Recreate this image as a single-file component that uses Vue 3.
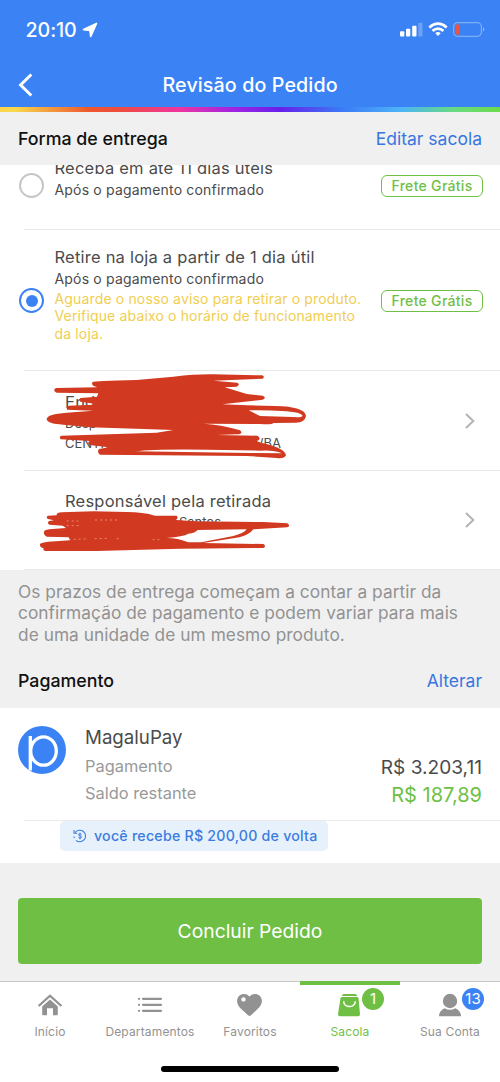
<script setup>
const tabs = [
  { id: 'home', label: 'Início' },
  { id: 'list', label: 'Departamentos' },
  { id: 'heart', label: 'Favoritos' },
  { id: 'bag', label: 'Sacola', badge: '1', active: true },
  { id: 'user', label: 'Sua Conta', badge: '13' },
]
</script>

<template>
  <div class="screen">
    <header class="header">
      <div class="status">
        <span class="time">20:10</span>
        <svg class="arrow" width="16" height="16" viewBox="0 0 16 16"><path d="M14.500 1.500 8.700 14.300 8 8.300 1.600 7.600z" fill="#fff" stroke="#fff" stroke-width="1.700" stroke-linejoin="round"/></svg>
        <svg class="signals" width="88" height="18" viewBox="0 0 88 18">
          <g fill="#fff">
            <rect x="1" y="10.200" width="4.300" height="5.200" rx="1"/>
            <rect x="7" y="7.800" width="4.300" height="7.600" rx="1"/>
            <rect x="13.200" y="4.700" width="4.300" height="10.700" rx="1"/>
            <rect x="19.300" y="1.700" width="4.200" height="13.700" rx="1" opacity=".25"/>
            <path d="M36.300 12.200q2.700-2.300 5.400 0L39 15z"/>
          </g>
          <g fill="none" stroke="#fff" stroke-width="2.700">
            <path d="M30.300 6.400q8.700-7.600 17.400 0"/>
            <path d="M33.500 9.900q5.500-4.500 11 0"/>
          </g>
          <rect x="54.600" y="1.700" width="27.800" height="13.600" rx="4" fill="none" stroke="#fff" stroke-opacity=".35" stroke-width="1.200"/>
          <rect x="56.400" y="3.400" width="4" height="10.200" rx="1.300" fill="#ec5545"/>
          <path d="M84 6.300q2.500 2.200 0 4.400z" fill="#fff" opacity=".45"/>
        </svg>
      </div>
      <div class="titlebar">
        <svg class="back" width="16" height="26" viewBox="0 0 16 26"><path d="M13.300 2.500 2.600 13l10.700 10.500" fill="none" stroke="#fff" stroke-width="3"/></svg>
        <h1>Revisão do Pedido</h1>
      </div>
    </header>
    <div class="stripe"></div>

    <div class="section-head">
      <h2>Forma de entrega</h2>
      <a>Editar sacola</a>
    </div>

    <main class="card">
      <section class="option option-first">
        <span class="radio"></span>
        <div class="copy">
          <p class="title">Receba em até 11 dias úteis</p>
          <p class="sub">Após o pagamento confirmado</p>
        </div>
        <span class="free">Frete Grátis</span>
      </section>
      <section class="option option-second">
        <span class="radio checked"></span>
        <div class="copy">
          <p class="title">Retire na loja a partir de 1 dia útil</p>
          <p class="sub">Após o pagamento confirmado</p>
          <p class="warn">Aguarde o nosso aviso para retirar o produto.<br>Verifique abaixo o horário de funcionamento<br>da loja.</p>
        </div>
        <span class="free">Frete Grátis</span>
      </section>
      <section class="detail address">
        <div class="copy">
          <p class="title">Endereço</p>
          <p class="line">Desp</p>
          <p class="line city"><span>CENTRO</span><span>/BA</span></p>
        </div>
        <svg class="chev" width="12" height="18" viewBox="0 0 12 18"><path d="m2 2 7.300 7L2 16" fill="none" stroke="#b4b4b4" stroke-width="2"/></svg>
        <svg class="scribble" width="290" height="105" viewBox="0 0 870 315">
          <path fill="#d13a20" d="M188 51Q192 48 320 45L430 35Q500 27 550 28L697 31Q706 36 698 41L550 47L622 53Q632 59 620 65L584 67L650 87L698 92Q711 98 698 104L577 118L650 121L735 123Q825 125 828 153Q824 174 795 173L731 174Q725 180 690 177L521 176Q570 178 630 196Q642 207 620 208L560 210L682 212Q693 218 686 226Q673 229 700 235Q765 250 768 271Q762 283 740 279L650 273L210 269Q200 261 207 252L235 247L178 240Q170 232 180 228L92 223Q86 216 94 212L380 203L430 195L180 187L100 179Q50 176 50 162Q52 147 110 143L190 137L111 134Q108 123 117 122L190 119L192 116L151 110Q144 102 152 99L201 95L205 85L80 83Q66 76 78 69L202 67L189 62Q184 56 188 51Z"/>
          <path fill="#fff" d="M656 136Q710 135 770 139Q810 142 818 152Q814 158 790 156L690 153ZM318 259Q370 252 530 254L690 257Q730 254 756 265L660 264Z"/>
        </svg>
      </section>
      <section class="detail pickup">
        <div class="copy">
          <p class="title">Responsável pela retirada</p>
          <p class="line person"><span>M</span><span>Santos</span></p>
        </div>
        <svg class="chev" width="12" height="18" viewBox="0 0 12 18"><path d="m2 2 7.300 7L2 16" fill="none" stroke="#b4b4b4" stroke-width="2"/></svg>
        <svg class="scribble" width="290" height="100" viewBox="0 0 870 300">
          <path fill="#d13a20" d="M54 107L80 106Q78 98 96 97L190 94L290 96Q340 96 375 107L440 107Q446 114 438 120L500 124L700 126L772 130Q783 137 772 142L670 148Q659 164 628 172L520 189L700 192Q710 199 700 204L450 206L200 213L45 213Q38 210 41 205Q28 202 30 192Q35 187 55 185L120 181L116 172L50 170Q38 164 43 153Q46 148 67 147L108 144L98 137L58 134Q50 129 57 123L72 121L54 117Q46 111 54 107Z"/>
          <path fill="#fff" d="M410 174Q460 170 475 161Q496 159 503 150L650 148Q641 160 610 168L514 187L475 187Q444 174 410 174Z"/>
          <path d="M110 123h35M195 120h72M110 137h38M116 179l60-3m18 0 44-1m22 1h8m100 3h20" fill="none" stroke="#e9b5aa" stroke-width="2" stroke-dasharray="6 9"/>
        </svg>
      </section>
    </main>

    <p class="note">Os prazos de entrega começam a contar a partir da<br>confirmação de pagamento e podem variar para mais<br>de uma unidade de um mesmo produto.</p>

    <div class="section-head pay-head">
      <h2>Pagamento</h2>
      <a>Alterar</a>
    </div>

    <section class="pay">
      <div class="pay-main">
        <svg class="logo" width="48" height="48" viewBox="0 0 48 48"><circle cx="24" cy="24" r="24" fill="#3b83f5"/><g fill="none" stroke="#fff" stroke-width="3.300"><path d="M12.300 10V44.500"/><ellipse cx="25.500" cy="25" rx="12.800" ry="14.200"/></g></svg>
        <div class="labels">
          <p class="brand">MagaluPay</p>
          <p class="muted first">Pagamento</p>
          <p class="muted">Saldo restante</p>
        </div>
        <div class="values">
          <p class="total">R$ 3.203,11</p>
          <p class="left">R$ 187,89</p>
        </div>
      </div>
      <div class="cash">
        <div class="chip">
          <svg width="14" height="14" viewBox="0 0 14 14"><g fill="none" stroke="#3b7ce0" stroke-width="1.100"><path d="M2.200 3.400A5.800 5.800 0 1 1 3 11.400M1 1v3.200h3.200M1 7.500l.3 1.600"/><path d="M8.500 5.400Q6.700 3.900 5.700 5.200 5.300 6.500 7 6.800q2 .4 1.400 1.800Q7 9.900 5.400 8.500M7 3.700v6.700" stroke-width=".9"/></g></svg>
          <span>você recebe R$ 200,00 de volta</span>
        </div>
      </div>
    </section>

    <div class="action"><button>Concluir Pedido</button></div>

    <nav class="tabs">
      <div v-for="t in tabs" :key="t.id" class="tab" :class="[t.id, { active: t.active }]">
        <div class="icon">
          <svg v-if="t.id === 'home'" width="26" height="26" viewBox="0 0 26 26"><path d="M1.600 14 13 3.700 24.400 14" fill="none" stroke="#929292" stroke-width="2.300"/><path d="m13 7.500 7.800 7.100v7.700q0 1-1 1H16v-7.100h-6v7.100H6.200q-1 0-1-1v-7.700z" fill="#929292"/></svg>
          <svg v-else-if="t.id === 'list'" width="26" height="26" viewBox="0 0 26 26"><g stroke="#929292" stroke-width="2.200" stroke-linecap="round"><path d="M6 6.800h18M6 12.800h18M6 18.800h18M2 6.800h.1M2 12.800h.1M2 18.800h.1"/></g></svg>
          <svg v-else-if="t.id === 'heart'" width="26" height="26" viewBox="0 0 26 26"><path fill="#929292" fill-rule="evenodd" d="M12.500 4.500C16.500-.2 24.900 2 24.900 9c0 4-3 6.700-5.300 9L13.900 23.300q-1.400 1.200-2.800 0L5.300 18C2.900 15.700.1 13 .1 9 .1 2 8.500-.2 12.500 4.500M6.500 5.200a2.200 2.200 0 1 0 0 4.400 2.200 2.200 0 0 0 0-4.400"/></svg>
          <svg v-else-if="t.id === 'bag'" width="26" height="26" viewBox="0 0 26 26"><path d="M6.400 2h12.200l2 2.100H4.400zM4.800 5h15.400q1.200 0 1.400 1.500L23 22.200q0 2-1.800 2H2.800Q1 24.200 1 22.200L3.400 6.500Q3.600 5 4.800 5" fill="#70bf45"/><path d="M6.700 9.200c0 7.200 11.600 7.200 11.600 0" fill="none" stroke="#fff" stroke-width="1.500"/></svg>
          <svg v-else width="26" height="26" viewBox="0 0 26 26"><circle cx="13" cy="9" r="7.200" fill="#929292"/><path d="M2 24.300q.2-5.600 5.500-8 5.500 3 11 0 5.300 2.400 5.500 8z" fill="#929292"/></svg>
          <span v-if="t.badge" class="badge">{{ t.badge }}</span>
        </div>
        <span class="label">{{ t.label }}</span>
      </div>
      <div class="homebar"></div>
    </nav>
  </div>
</template>

<style>
body { margin: 0; background: #fff; }
</style>
<style scoped>
* { box-sizing: border-box; }
p, h1, h2 { margin: 0; font-weight: 400; }
.screen { width: 500px; height: 1082px; overflow: hidden; background: #f0f0f0; font-family: Inter, "Liberation Sans", sans-serif; color: #4b4b4b; white-space: nowrap; display: flex; flex-direction: column; }
.header { height: 107px; background: #3b83f5; color: #fff; flex: none; }
.status { height: 60px; padding: 0 20px 0 25.500px; display: flex; align-items: center; }
.time { font-size: 19.700px; font-weight: 500; letter-spacing: -.1px; }
.arrow { margin-left: 5px; }
.signals { margin-left: auto; margin-right: -7px; }
.titlebar { height: 47px; display: grid; grid-template-columns: 144.500px 176px 1fr; align-items: center; padding: 3px 0 0 18px; }
h1 { font-size: 19.700px; font-weight: 500; line-height: 24px; letter-spacing: .1px; margin-top: -1px; }
.stripe { height: 5px; flex: none; background: linear-gradient(90deg, #fbd64b 0, #f7d84c 3%, #ee562d 18%, #ee4c40 24%, #f034a0 36%, #a425e0 46%, #6720ea 56%, #3b78f5 68%, #4db3f8 80%, #68dc80 91%, #6cdb4c 100%); }
.section-head { height: 53px; padding: 0 18px; display: flex; justify-content: space-between; align-items: center; background: #f0f0f0; flex: none; line-height: 24px; }
h2 { color: #111; font-size: 17.800px; font-weight: 500; }
.section-head a { color: #3976df; font-size: 17.500px; }
.card { height: 405px; background: #fff; flex: none; }
.option, .detail { position: relative; display: flex; }
.option { padding: 0 17px 0 18px; }
.option::after, .address::after, .pickup::after { content: ""; position: absolute; left: 24px; right: 0; bottom: 0; height: 1px; background: #e8e8e8; }
.option-first { height: 65px; overflow: hidden; }
.option-second { height: 141px; }
.radio { width: 25px; height: 25px; border: 2px solid #c6c6c6; border-radius: 50%; flex: none; margin: 8px 10.500px 0 1px; }
.option-second .radio { margin-top: 58px; border: 2.500px solid #3b83f5; display: grid; place-items: center; }
.checked::after { content: ""; width: 12px; height: 12px; border-radius: 50%; background: #3b83f5; }
.option-first .copy { margin-top: -8px; }
.option-second .copy { margin-top: 16px; }
.copy .title { font-size: 16.500px; line-height: 22px; letter-spacing: .22px; }
.sub { font-size: 14px; line-height: 21px; letter-spacing: .18px; }
.warn { font-size: 14px; line-height: 17.400px; letter-spacing: .15px; color: #f0ce50; padding-top: 1px; }
.free { margin-left: auto; width: 102px; height: 22px; border: 1.200px solid #70bf45; border-radius: 6px; color: #70bf45; font-size: 14px; font-weight: 500; line-height: 20px; text-align: center; letter-spacing: .3px; margin-top: 10px; flex: none; }
.option-second .free { margin-top: 60px; }
.detail { padding: 0 24px 0 65px; align-items: center; }
.address { height: 100px; }
.pickup { height: 99px; }
.detail .copy { align-self: flex-start; margin-top: 20px; }
.pickup .copy { margin-top: 19px; }
.line { font-size: 13px; line-height: 20px; }
.city { display: flex; justify-content: space-between; width: 216px; }
.person { display: flex; justify-content: space-between; width: 156px; }
.chev { margin-left: auto; }
.pickup .chev { margin-top: -1px; }
.scribble { position: absolute; left: 30px; top: -6px; }
.pickup .scribble { top: 9px; }
.note { height: 84px; padding: 11px 18px 0; font-size: 17.300px; line-height: 21.300px; letter-spacing: .05px; color: #929292; flex: none; }
.pay-head { height: 54px; }
.pay { height: 155px; background: #fff; flex: none; }
.pay-main { height: 112px; padding: 18px 18px 0; display: flex; }
.labels { margin-left: 19px; }
.brand { font-size: 18.700px; line-height: 24px; }
.muted { font-size: 16.400px; line-height: 27px; color: #999; }
.first { padding-top: 3px; }
.values { margin-left: auto; text-align: right; padding-top: 28px; font-size: 19.100px; line-height: 27px; }
.left { color: #70bf45; font-size: 20px; line-height: 28px; }
.cash { border-top: 1px solid #ebebeb; margin-left: 24px; padding-left: 36px; }
.chip { width: 268px; height: 30px; background: #e7f1fc; border-radius: 5px; display: flex; align-items: center; padding: 0 0 1px 13px; color: #3b7ce0; font-size: 14.200px; font-weight: 500; letter-spacing: .23px; }
.chip svg { margin-right: 7px; }
.action { height: 118px; padding: 35px 18px 0; flex: none; }
button { display: block; width: 464px; height: 66px; border: 0; border-radius: 4px; background: #70bf45; color: #fff; font: 400 19.300px/67px Inter, sans-serif; padding: 0; }
.tabs { position: relative; height: 101px; border-top: 1px solid #c8c8c8; background: #fff; display: grid; grid-template-columns: repeat(5, 1fr); flex: none; }
.tab { text-align: center; color: #929292; border-top: 4px solid transparent; margin-top: -1px; padding-top: 7px; }
.active { border-color: #70bf45; color: #70bf45; }
.icon { position: relative; width: 26px; height: 26px; margin: 0 auto; }
.icon svg { display: block; }
.label { display: block; font-size: 12px; line-height: 16px; margin-top: 6px; letter-spacing: .15px; }
.badge { position: absolute; left: 25px; top: -4px; width: 22px; height: 22px; border-radius: 50%; color: #fff; background: #70bf45; font-size: 15px; line-height: 22px; letter-spacing: 0; }
.user .badge { background: #3b83f5; }
.homebar { position: absolute; left: 161px; bottom: 10px; width: 178px; height: 6px; border-radius: 3px; background: #000; }
</style>
